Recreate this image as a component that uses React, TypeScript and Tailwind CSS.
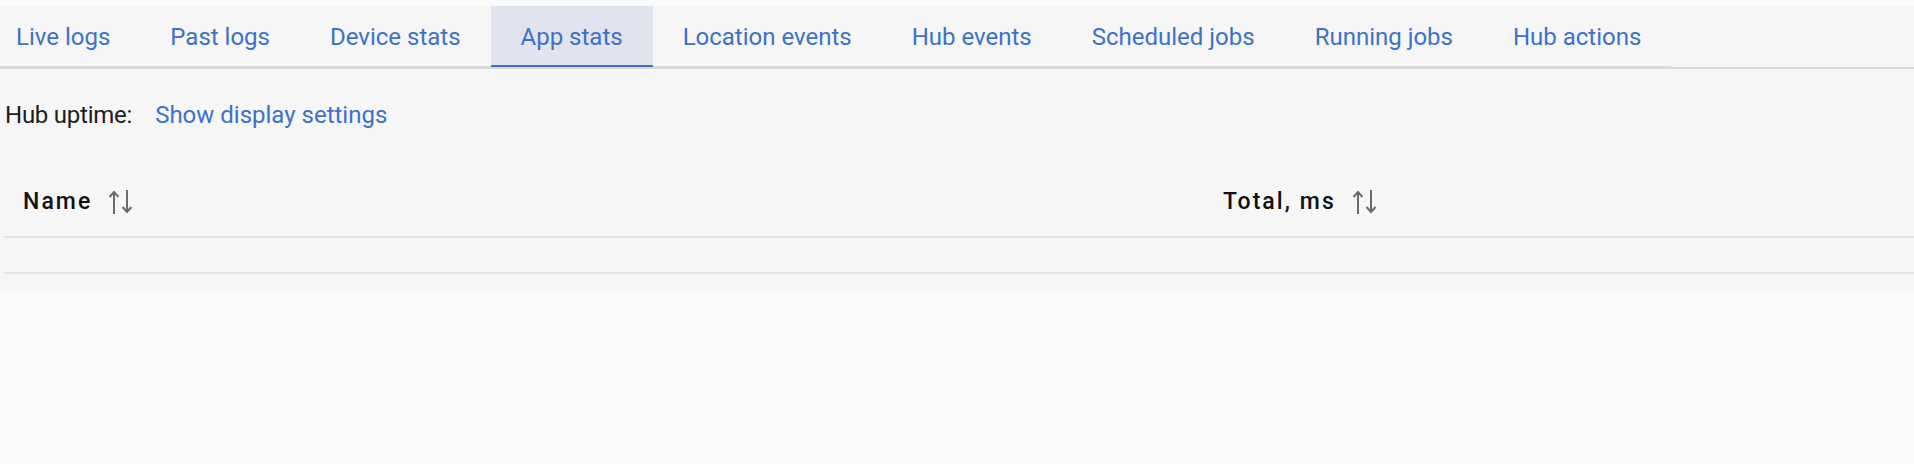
import React from "react";

const tabs = [
  "Live logs",
  "Past logs",
  "Device stats",
  "App stats",
  "Location events",
  "Hub events",
  "Scheduled jobs",
  "Running jobs",
  "Hub actions",
];

function SortIcon() {
  return (
    <svg
      width="26"
      height="26"
      viewBox="0 0 26 26"
      fill="none"
      stroke="#6b6b6b"
      strokeWidth="2"
      strokeLinecap="butt"
      strokeLinejoin="miter"
      className="shrink-0"
    >
      <path d="M6 3V25" />
      <path d="M1.5 8l4.5-5 4.5 5" />
      <path d="M19 1v21.5" />
      <path d="M14.5 18l4.5 5 4.5-5" />
    </svg>
  );
}

export default function App() {
  return (
    <div
      className="w-full min-h-[464px] bg-[#fafafa] pt-[6px]"
      style={{ fontFamily: "Roboto, 'Liberation Sans', sans-serif" }}
    >
      <div className="bg-[#f6f6f6] pb-[19px]">
        <div className="flex h-[63px] border-b-2 border-[#d9d9d9]">
          {tabs.map((t, i) => {
            const active = t === "App stats";
            return (
              <div
                key={t}
                className={
                  "flex h-[61px] items-center text-[24px] leading-[28px] text-[#3b72c8] " +
                  (i === 0 ? "pl-[16px] pr-[30px] " : "px-[30px] ") +
                  (active
                    ? "bg-[#e1e3ef] border-b-2 border-[#3c70c6]"
                    : "border-b border-[#d9d9d9]")
                }
              >
                <span className="pt-[2px]">{t}</span>
              </div>
            );
          })}
        </div>

        <div className="mt-[32px] flex items-center pl-[5px] text-[24px] leading-[28px]">
          <span className="tracking-[-0.01em] text-[#1c1c1c]">Hub uptime:</span>
          <span className="ml-[23px] text-[#3b72c8]">Show display settings</span>
        </div>

        <div className="ml-[4px] mt-[39px]">
          <div className="grid h-[70px] grid-cols-[1200px_1fr] border-b-2 border-[#e3e3e3]">
            <div className="flex items-center pl-[19px]">
              <span className="text-[23px] font-medium leading-[24px] tracking-[0.09em] text-[#111111]">
                Name
              </span>
              <span className="ml-[16px]">
                <SortIcon />
              </span>
            </div>
            <div className="flex items-center pl-[19px]">
              <span className="text-[23px] font-medium leading-[24px] tracking-[0.09em] text-[#111111]">
                Total, ms
              </span>
              <span className="ml-[16px]">
                <SortIcon />
              </span>
            </div>
          </div>
          <div className="h-[36px] border-b-2 border-[#e3e3e3]" />
        </div>
      </div>
    </div>
  );
}
